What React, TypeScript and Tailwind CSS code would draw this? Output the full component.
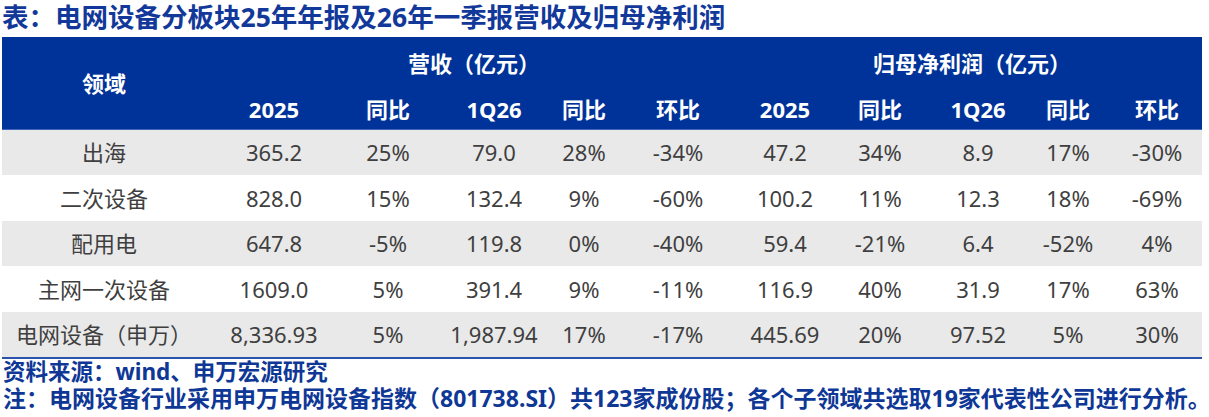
import React from 'react';

type Row = { name: string; cells: string[] };

const rows: Row[] = [
  { name: '出海', cells: ['365.2', '25%', '79.0', '28%', '-34%', '47.2', '34%', '8.9', '17%', '-30%'] },
  { name: '二次设备', cells: ['828.0', '15%', '132.4', '9%', '-60%', '100.2', '11%', '12.3', '18%', '-69%'] },
  { name: '配用电', cells: ['647.8', '-5%', '119.8', '0%', '-40%', '59.4', '-21%', '6.4', '-52%', '4%'] },
  { name: '主网一次设备', cells: ['1609.0', '5%', '391.4', '9%', '-11%', '116.9', '40%', '31.9', '17%', '63%'] },
  { name: '电网设备（申万）', cells: ['8,336.93', '5%', '1,987.94', '17%', '-17%', '445.69', '20%', '97.52', '5%', '30%'] },
];

const subHeads = ['2025', '同比', '1Q26', '同比', '环比', '2025', '同比', '1Q26', '同比', '环比'];

// column widths tuned so each column's centre lands where the reference has it
const cols = 'grid-cols-[204px_136px_92px_120px_60px_128px_86px_104px_92px_88px_90px]';

export default function App() {
  return (
    <div className="w-[1209px] h-[417px] bg-white overflow-hidden font-['Noto_Sans','Noto_Sans_CJK_SC',sans-serif]">
      <div className="h-[37px] pl-[2px] text-[26.5px] leading-[34px] font-bold text-[#12399a] whitespace-nowrap">
        表：电网设备分板块25年年报及26年一季报营收及归母净利润
      </div>

      <div className="ml-[2px] w-[1200px]">
        {/* header */}
        <div className={`grid ${cols} grid-rows-[52px_40px] bg-[#003399] border-b border-[#3f63b8] text-white font-bold text-[22px]`}>
          <div className="row-span-2 flex items-center justify-center">领域</div>
          <div className="col-span-5 flex items-center justify-center">营收（亿元）</div>
          <div className="col-span-5 flex items-center justify-center">归母净利润（亿元）</div>
          {subHeads.map((h, i) => (
            <div key={i} className="flex items-center justify-center">{h}</div>
          ))}
        </div>

        {/* body */}
        {rows.map((r, idx) => (
          <div
            key={r.name}
            className={`grid ${cols} ${idx % 2 === 0 ? 'bg-[#e9e9e9]' : 'bg-white'} ${idx % 2 === 0 ? 'h-[45px]' : 'h-[46px]'} text-[22px] text-[#3f3f3f]`}
          >
            <div className="flex items-center justify-center whitespace-nowrap">{r.name}</div>
            {r.cells.map((c, i) => (
              <div key={i} className="flex items-center justify-center whitespace-nowrap">{c}</div>
            ))}
          </div>
        ))}
        <div className="h-[2px] bg-[#2b52ad]" />
      </div>

      <div className="pl-[3px] leading-[26px] font-bold text-[#0e3796] whitespace-nowrap">
        <div className="text-[22.5px]">资料来源：wind、申万宏源研究</div>
        <div className="text-[23px]">注：电网设备行业采用申万电网设备指数（801738.SI）共123家成份股；各个子领域共选取19家代表性公司进行分析。</div>
      </div>
    </div>
  );
}
